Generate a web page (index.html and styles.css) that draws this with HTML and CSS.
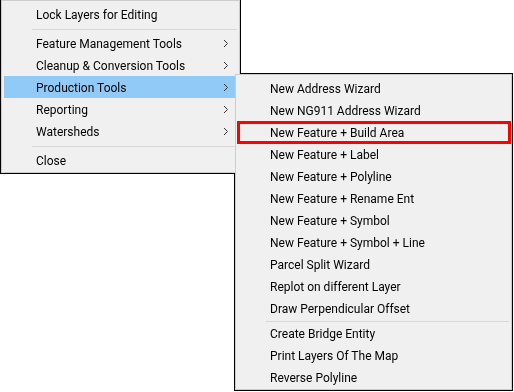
FILE: index.html
```html
<!DOCTYPE html>
<html lang="en">
<head>
    <meta charset="UTF-8">
    <meta name="viewport" content="width=device-width, initial-scale=1.0">
    <title>Context Menu</title>
    <link rel="stylesheet" href="styles.css">
</head>
<body>
    <div class="menu-wrap">
        <!-- 메인 메뉴 -->
        <ul class="menu main-menu">
            <li class="menu-item">Lock Layers for Editing</li>
            <li class="separator"></li>
            <li class="menu-item">Feature Management Tools
                <svg class="arrow" width="6" height="9" viewBox="0 0 6 9"><path d="M1 1 L4.5 4.5 L1 8" /></svg>
            </li>
            <li class="menu-item">Cleanup &amp; Conversion Tools
                <svg class="arrow" width="6" height="9" viewBox="0 0 6 9"><path d="M1 1 L4.5 4.5 L1 8" /></svg>
            </li>
            <li class="menu-item active">Production Tools
                <svg class="arrow" width="6" height="9" viewBox="0 0 6 9"><path d="M1 1 L4.5 4.5 L1 8" /></svg>
            </li>
            <li class="menu-item">Reporting
                <svg class="arrow" width="6" height="9" viewBox="0 0 6 9"><path d="M1 1 L4.5 4.5 L1 8" /></svg>
            </li>
            <li class="menu-item">Watersheds
                <svg class="arrow" width="6" height="9" viewBox="0 0 6 9"><path d="M1 1 L4.5 4.5 L1 8" /></svg>
            </li>
            <li class="separator"></li>
            <li class="menu-item">Close</li>
        </ul>

        <!-- Production Tools 하위 메뉴 -->
        <ul class="menu sub-menu">
            <li class="menu-item">New Address Wizard</li>
            <li class="menu-item">New NG911 Address Wizard</li>
            <li class="menu-item marked">New Feature + Build Area</li>
            <li class="menu-item">New Feature + Label</li>
            <li class="menu-item">New Feature + Polyline</li>
            <li class="menu-item">New Feature + Rename Ent</li>
            <li class="menu-item">New Feature + Symbol</li>
            <li class="menu-item">New Feature + Symbol + Line</li>
            <li class="menu-item">Parcel Split Wizard</li>
            <li class="menu-item">Replot on different Layer</li>
            <li class="menu-item">Draw Perpendicular Offset</li>
            <li class="separator short"></li>
            <li class="menu-item">Create Bridge Entity</li>
            <li class="menu-item">Print Layers Of The Map</li>
            <li class="menu-item">Reverse Polyline</li>
        </ul>
    </div>
</body>
</html>
```

FILE: styles.css
```css
body {
    margin: 0;
    background-color: #fff;
    font-family: Roboto, "Liberation Sans", sans-serif;
    font-size: 12px;
    color: #000;
}
.menu-wrap {
    position: relative;
    margin-left: 1px;
    width: 512px;
    height: 391px;
    filter: drop-shadow(1px 0 0 #000) drop-shadow(-1px 0 0 #000) drop-shadow(0 1px 0 #000) drop-shadow(0 -1px 0 #000);
}
.menu {
    list-style: none;
    margin: 0;
    padding: 2px 2px 1px 2px;
    background-color: #f0f0f0;
    border: 1px solid #cccccc;
    box-sizing: border-box;
}
.main-menu {
    width: 239px;
}
.sub-menu {
    position: absolute;
    left: 234px;
    top: 74px;
    width: 277px;
}
.menu-item {
    position: relative;
    display: flex;
    align-items: center;
    height: 22px;
    box-sizing: border-box;
    line-height: 20px;
    padding: 2px 8px 0 32px;
    white-space: nowrap;
}
.menu-item.active {
    background-color: #91c9f7;
}
.arrow {
    margin-left: auto;
    margin-top: -2px;
}
.arrow path {
    fill: none;
    stroke: #333;
    stroke-width: 1;
}
.separator {
    height: 1px;
    margin: 4px 0 2px 28px;
    background-color: #d7d7d7;
}
.separator.short {
    margin: 2px 0 0 28px;
}
.menu-item.marked::after {
    content: "";
    position: absolute;
    left: -1px;
    right: -2px;
    top: 0;
    bottom: -1px;
    border: 3px solid #f00;
}
```
